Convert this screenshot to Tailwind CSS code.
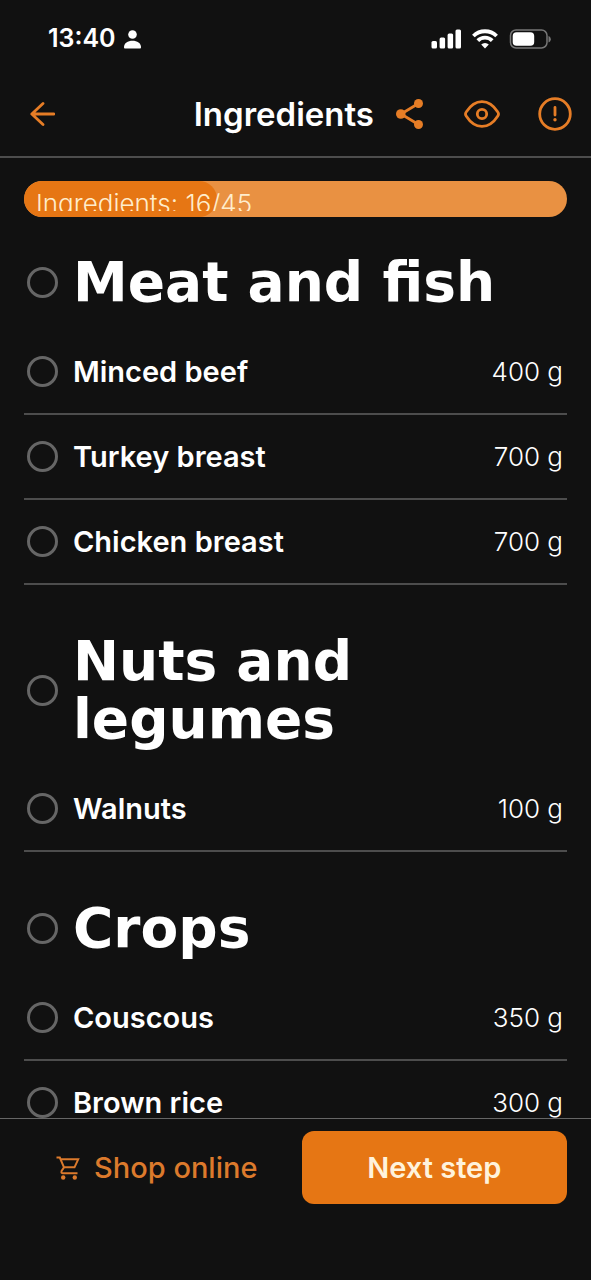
<!DOCTYPE html>
<html lang="en">
<head>
<meta charset="utf-8">
<meta name="viewport" content="width=device-width, initial-scale=1">
<title>Ingredients</title>
<script src="https://cdn.jsdelivr.net/npm/@tailwindcss/browser@4"></script>
</head>
<body class="bg-[#111111] text-white font-['Inter',sans-serif]">
<div class="flex h-screen flex-col overflow-hidden">

  <div class="flex h-[78px] shrink-0 items-center justify-between pr-10 pl-12">
    <div class="flex items-center gap-2">
      <span class="text-[25px] font-semibold">13:40</span>
      <svg class="h-[19px] w-[17px]" viewBox="0 0 17 19" fill="#fff" aria-hidden="true"><circle cx="8.500" cy="4.500" r="4.300"/><path d="M0 17.200C0 13.200 3.800 10.800 8.500 10.800s8.500 2.400 8.500 6.400c0 .8-.5 1.300-1.200 1.300H1.200C.5 18.500 0 18 0 17.200z"/></svg>
    </div>
    <div class="flex items-center gap-[11px]">
      <svg class="h-5 w-[30px]" viewBox="0 0 30 20" fill="#fff" aria-hidden="true"><rect x="0.500" y="12" width="5.500" height="7.500" rx="1.500"/><rect x="8.600" y="8.500" width="5.500" height="11" rx="1.500"/><rect x="16.600" y="4.500" width="5.500" height="15" rx="1.500"/><rect x="24.500" y="0.500" width="5.500" height="19" rx="1.500"/></svg>
      <svg class="h-5 w-[26px]" viewBox="0 0 26 20" fill="none" stroke="#fff" stroke-width="3.800" aria-hidden="true"><path d="M1.400 7a16.500 16.500 0 0 1 23.200 0"/><path d="M5.800 11.700a10.200 10.200 0 0 1 14.400 0"/><path d="M13 19.500l-3.800-3.900a5.400 5.400 0 0 1 7.600 0z" fill="#fff" stroke="none"/></svg>
      <svg class="h-5 w-[42px]" viewBox="0 0 42 20" aria-hidden="true"><rect x="1.500" y="1" width="36.500" height="18" rx="5.500" fill="none" stroke="#777" stroke-width="1.500"/><rect x="3.700" y="3.200" width="21.500" height="13.600" rx="3.800" fill="#fff"/><path d="M39.500 7v6.500c1.400-.6 2.300-1.800 2.300-3.200s-.9-2.700-2.300-3.300z" fill="#777"/></svg>
    </div>
  </div>

  <header class="flex h-20 shrink-0 items-center border-b-2 border-[#4d4d4d] pr-[19px] pb-[7px] pl-[30px] text-[#e67d26]">
    <button type="button" aria-label="Back">
      <svg class="h-6 w-[25px]" viewBox="0 0 25 24" fill="none" stroke="currentColor" stroke-width="2.800" stroke-linecap="round" stroke-linejoin="round"><path d="M24 12H2M13 1.500L1.800 12 13 22.500"/></svg>
    </button>
    <h1 class="mr-[22px] ml-auto text-[33px] leading-10 font-semibold text-white">Ingredients</h1>
    <div class="flex items-center gap-[38px]">
      <button type="button" aria-label="Share">
        <svg class="h-8 w-[30px]" viewBox="0 0 30 32" fill="currentColor" stroke="currentColor"><path d="M22.500 5.500L5 16l17.500 10.500" fill="none" stroke-width="2.800"/><circle cx="22.500" cy="5.500" r="4.500" stroke="none"/><circle cx="4.800" cy="16" r="4.800" stroke="none"/><circle cx="22.500" cy="26.500" r="4.500" stroke="none"/></svg>
      </button>
      <button type="button" aria-label="View">
        <svg class="h-7 w-9" viewBox="0 0 36 28" fill="none" stroke="currentColor" stroke-width="2.800"><path d="M2.200 16C1.300 14.700 1.300 13.300 2.200 12 6 6 11.500 1.600 18 1.600S30 6 33.800 12c.9 1.300.9 2.700 0 4C30 22 24.500 26.400 18 26.400S6 22 2.200 16z"/><circle cx="18" cy="14" r="4.700"/></svg>
      </button>
      <button type="button" aria-label="Report">
        <svg class="h-[34px] w-[34px]" viewBox="0 0 34 34" fill="none" stroke="currentColor" stroke-width="2.800" stroke-linecap="round"><circle cx="17" cy="17" r="15.300"/><path d="M17 10.500v7.500"/><circle cx="17" cy="22.800" r="1.700" fill="currentColor" stroke="none"/></svg>
      </button>
    </div>
  </header>

  <main class="min-h-0 flex-1 overflow-hidden px-6 pt-[23px]">
    <div class="relative h-9 overflow-hidden rounded-full bg-[#e99142]" role="progressbar" aria-label="Ingredients" aria-valuenow="16" aria-valuemin="0" aria-valuemax="45">
      <div class="h-full rounded-full bg-[#e67614]" style="width:35.6%"></div>
      <div class="absolute inset-x-3 top-2 bottom-[6px] overflow-hidden text-[26px] leading-[30px] font-light text-[#ffedcc]">Ingredients: 16/45</div>
    </div>

    <section class="mt-9">
      <label class="flex items-center gap-[15px] pl-[3px]">
        <input type="checkbox" class="size-[31px] shrink-0 appearance-none rounded-full border-3 border-[#666666]">
        <h2 class="max-w-[440px] font-['DejaVu_Sans',sans-serif] text-[55px] leading-[58px] font-bold">Meat and fish</h2>
      </label>
      <ul class="mt-[19px]">
        <li class="border-b-2 border-[#4d4d4d]"><label class="flex h-[83px] items-center gap-[15px] pr-1 pl-[3px]"><input type="checkbox" class="size-[31px] shrink-0 appearance-none rounded-full border-3 border-[#666666]"><span class="flex-1 text-[29px] font-semibold">Minced beef</span><span class="text-[26px] font-light">400 g</span></label></li>
        <li class="border-b-2 border-[#4d4d4d]"><label class="flex h-[83px] items-center gap-[15px] pr-1 pl-[3px]"><input type="checkbox" class="size-[31px] shrink-0 appearance-none rounded-full border-3 border-[#666666]"><span class="flex-1 text-[29px] font-semibold">Turkey breast</span><span class="text-[26px] font-light">700 g</span></label></li>
        <li class="border-b-2 border-[#4d4d4d]"><label class="flex h-[83px] items-center gap-[15px] pr-1 pl-[3px]"><input type="checkbox" class="size-[31px] shrink-0 appearance-none rounded-full border-3 border-[#666666]"><span class="flex-1 text-[29px] font-semibold">Chicken breast</span><span class="text-[26px] font-light">700 g</span></label></li>
      </ul>
    </section>

    <section class="mt-[47px]">
      <label class="flex items-center gap-[15px] pl-[3px]">
        <input type="checkbox" class="size-[31px] shrink-0 appearance-none rounded-full border-3 border-[#666666]">
        <h2 class="max-w-[440px] font-['DejaVu_Sans',sans-serif] text-[55px] leading-[58px] font-bold">Nuts and legumes</h2>
      </label>
      <ul class="mt-[19px]">
        <li class="border-b-2 border-[#4d4d4d]"><label class="flex h-[83px] items-center gap-[15px] pr-1 pl-[3px]"><input type="checkbox" class="size-[31px] shrink-0 appearance-none rounded-full border-3 border-[#666666]"><span class="flex-1 text-[29px] font-semibold">Walnuts</span><span class="text-[26px] font-light">100 g</span></label></li>
      </ul>
    </section>

    <section class="mt-[47px]">
      <label class="flex items-center gap-[15px] pl-[3px]">
        <input type="checkbox" class="size-[31px] shrink-0 appearance-none rounded-full border-3 border-[#666666]">
        <h2 class="max-w-[440px] font-['DejaVu_Sans',sans-serif] text-[55px] leading-[58px] font-bold">Crops</h2>
      </label>
      <ul class="mt-[19px]">
        <li class="border-b-2 border-[#4d4d4d]"><label class="flex h-[83px] items-center gap-[15px] pr-1 pl-[3px]"><input type="checkbox" class="size-[31px] shrink-0 appearance-none rounded-full border-3 border-[#666666]"><span class="flex-1 text-[29px] font-semibold">Couscous</span><span class="text-[26px] font-light">350 g</span></label></li>
        <li class="border-b-2 border-[#4d4d4d]"><label class="flex h-[83px] items-center gap-[15px] pr-1 pl-[3px]"><input type="checkbox" class="size-[31px] shrink-0 appearance-none rounded-full border-3 border-[#666666]"><span class="flex-1 text-[29px] font-semibold">Brown rice</span><span class="text-[26px] font-light">300 g</span></label></li>
      </ul>
    </section>
  </main>

  <footer class="grid shrink-0 grid-cols-2 gap-3 border-t border-[#666666] px-6 pt-3 pb-[76px]">
    <button type="button" class="flex h-[73px] items-center justify-center gap-[14px] text-[29px] font-medium text-[#dc7a2c]">
      <svg class="h-6 w-6" viewBox="0 0 24 24" fill="none" stroke="currentColor" stroke-width="2" aria-hidden="true"><path d="M.5 1.500h3.300L8 11.300 5.600 15q-.8 2.300 1.500 2.300h14.400M5 3.300h17.200l-3.700 8H8"/><circle cx="7.200" cy="21.500" r="2.200" fill="currentColor" stroke="none"/><circle cx="18.800" cy="21.500" r="2.200" fill="currentColor" stroke="none"/></svg>
      Shop online
    </button>
    <button type="button" class="h-[73px] rounded-xl bg-[#e67614] text-[29px] font-semibold text-[#fff3dc]">Next step</button>
  </footer>
</div>
</body>
</html>
